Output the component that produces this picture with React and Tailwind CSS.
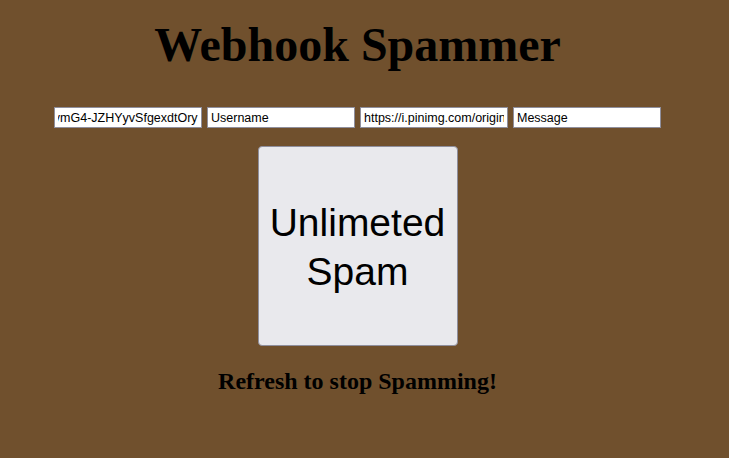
import { useEffect, useRef } from 'react';

export default function App() {
  const hookRef = useRef(null);

  // keep the webhook field scrolled to its end, like after typing
  useEffect(() => {
    if (hookRef.current) hookRef.current.scrollLeft = hookRef.current.scrollWidth;
  }, []);

  const inputs = [
    { value: 'https://discord.com/api/webhooks/1093/JvmG4-JZHYyvSfgexdtOry', placeholder: '' },
    { value: '', placeholder: 'Username' },
    { value: 'https://i.pinimg.com/originals/avatar.png', placeholder: '' },
    { value: '', placeholder: 'Message' },
  ];

  return (
    <div className="min-h-[458px] w-full bg-[#70502d]">
      <div className="w-[715px] flex flex-col items-center">
        <h1 className="mt-[17px] text-[48px] leading-[55px] font-bold text-black font-['Liberation_Serif',serif]">
          Webhook Spammer
        </h1>

        {/* Inputs */}
        <div className="mt-[35px] flex gap-[5px]">
          {inputs.map((inp, i) => (
            <input
              key={i}
              ref={i === 0 ? hookRef : null}
              type="text"
              defaultValue={inp.value}
              placeholder={inp.placeholder}
              className="h-[21px] w-[148px] bg-white border border-[#8f8f9d] px-[3px] text-[12.5px] text-black placeholder:text-black outline-none font-['Liberation_Sans',sans-serif]"
            />
          ))}
        </div>

        <button
          type="button"
          className="mt-[18px] w-[200px] h-[200px] pt-[2px] bg-[#e9e9ed] border border-[#8f8f9d] rounded-[4px] text-[39px] leading-[49px] text-black font-['Liberation_Sans',sans-serif]"
        >
          Unlimeted
          <br />
          Spam
        </button>

        <h3 className="mt-[21px] text-[24px] leading-[28px] font-bold text-black font-['Liberation_Serif',serif]">
          Refresh to stop Spamming!
        </h3>
      </div>
    </div>
  );
}
